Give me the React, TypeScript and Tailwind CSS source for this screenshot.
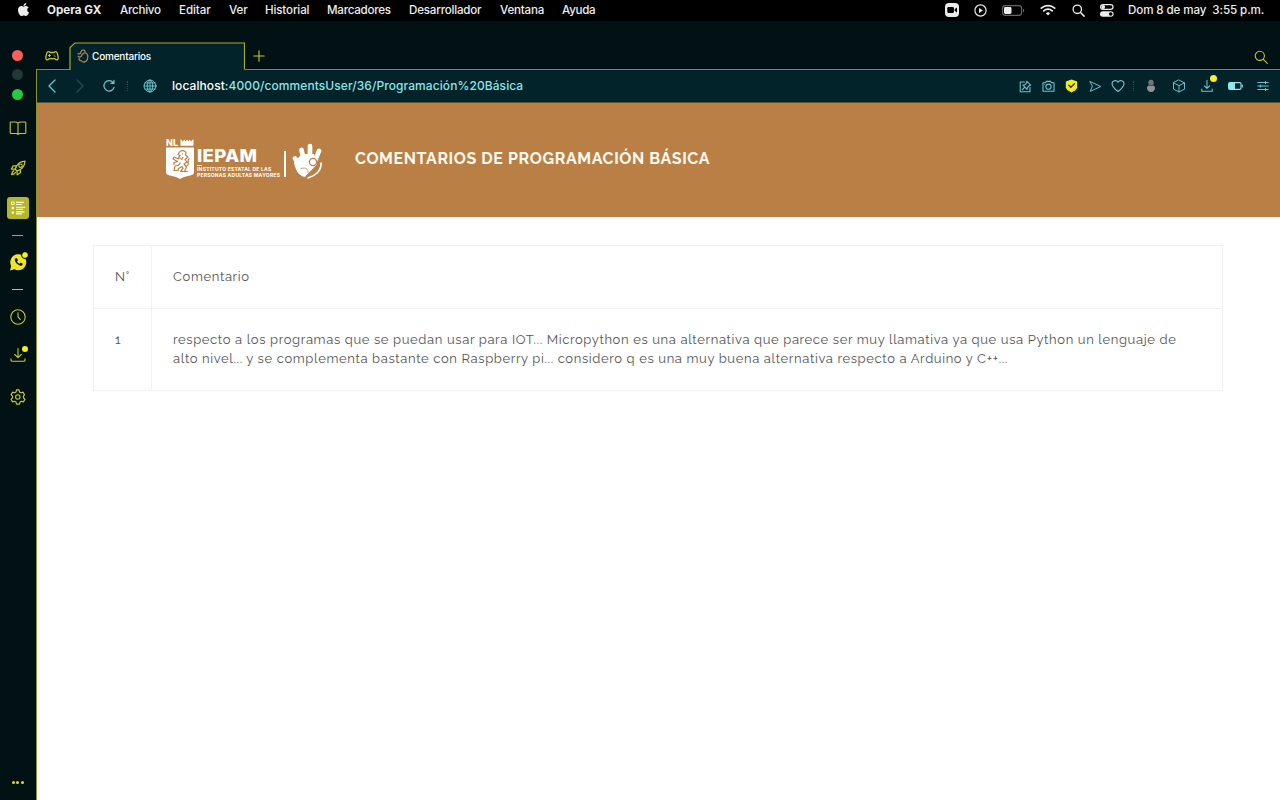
import type { ReactNode } from "react";
import { FaApple } from "react-icons/fa";

type IconProps = { className?: string; children: ReactNode; box?: string };

function Icon({ className = "", children, box = "0 0 16 16" }: IconProps) {
  return (
    <svg
      viewBox={box}
      className={`shrink-0 ${className}`}
      fill="none"
      stroke="currentColor"
      strokeWidth="1.1"
      strokeLinecap="round"
      strokeLinejoin="round"
    >
      {children}
    </svg>
  );
}

const menus = [
  { label: "Archivo", style: "ml-[18px] w-[41px] tracking-[-0.25px]" },
  { label: "Editar", style: "ml-[18px] w-[32px] tracking-[-0.1px]" },
  { label: "Ver", style: "ml-[18px] w-[18px] tracking-[-0.1px]" },
  { label: "Historial", style: "ml-[18px] w-[44px] tracking-[-0.15px]" },
  { label: "Marcadores", style: "ml-[18px] w-[64px] tracking-[-0.25px]" },
  { label: "Desarrollador", style: "ml-[18px] w-[73px] tracking-[-0.2px]" },
  { label: "Ventana", style: "ml-[18px] w-[44px] tracking-[-0.2px]" },
  { label: "Ayuda", style: "ml-[18px] w-[34px] tracking-[-0.3px]" },
];

function MenuBar() {
  return (
    <header className="flex h-[21px] shrink-0 items-center bg-black pr-4 text-[11.6px] font-medium text-[#ececec]">
      <FaApple className="ml-[17px] h-[15px] w-[13px] shrink-0 -translate-y-px" />
      <span className="ml-[17px] w-[55px] whitespace-nowrap font-bold">Opera GX</span>
      {menus.map((m) => (
        <span key={m.label} className={`whitespace-nowrap ${m.style}`}>
          {m.label}
        </span>
      ))}
      <div className="ml-auto flex items-center">
        <Icon className="h-[14px] w-[14px]" box="0 0 14 14">
          <rect width="14" height="14" rx="4" fill="currentColor" stroke="none" />
          <rect x="2.3" y="4" width="6.6" height="6" rx="1.2" fill="#000" stroke="none" />
          <path d="M9.6 6.2 12 4.5v5L9.6 7.8z" fill="#000" stroke="none" />
        </Icon>
        <Icon className="ml-[15px] h-[13px] w-[13px]" box="0 0 13 13">
          <circle cx="6.5" cy="6.5" r="5.6" strokeWidth="1.2" />
          <path d="M5 4.1v4.8l4-2.4z" fill="currentColor" stroke="none" />
        </Icon>
        <Icon className="ml-[15px] h-[11px] w-[23px]" box="0 0 23 11">
          <rect x="0.6" y="0.6" width="19" height="9.8" rx="2.8" stroke="#666" />
          <rect x="2" y="2" width="7.5" height="7" rx="1.4" fill="currentColor" stroke="none" />
          <path d="M21.5 4.5v2" stroke="#666" />
        </Icon>
        <Icon className="ml-[15px] h-[12px] w-[16px]" box="0 0 16 12">
          <path d="M1.300 4.200a9.800 9.800 0 0 1 13.400 0M3.800 6.800a6.200 6.200 0 0 1 8.400 0" strokeWidth="1.700" />
          <path d="M8 11.500 5.800 9.300a3.200 3.200 0 0 1 4.400 0z" fill="currentColor" stroke="none" />
        </Icon>
        <Icon className="ml-4 h-[13px] w-[13px]" box="0 0 13 13">
          <circle cx="5.300" cy="5.300" r="4.200" strokeWidth="1.300" />
          <path d="m8.500 8.500 3.600 3.600" strokeWidth="1.500" />
        </Icon>
        <Icon className="ml-[15px] h-[13px] w-[14px]" box="0 0 14 13">
          <rect x="0.600" y="0.600" width="12.400" height="4.800" rx="2.400" strokeWidth="1.200" />
          <circle cx="3.200" cy="3" r="1.900" fill="currentColor" stroke="none" />
          <rect y="7.200" width="13.600" height="5.600" rx="2.800" fill="currentColor" stroke="none" />
          <circle cx="10.700" cy="10" r="1.800" fill="#000" stroke="none" />
        </Icon>
        <span className="ml-[14px] w-[136px] whitespace-pre tracking-[-0.1px]">Dom 8 de may  3:55 p.m.</span>
      </div>
    </header>
  );
}

function Sidebar() {
  return (
    <nav className="flex w-9 shrink-0 flex-col items-center bg-[#011114] pr-px text-[#c6c92c]">
      <i className="mt-[29px] h-[11px] w-[11px] shrink-0 rounded-full bg-[#fb5f57]" />
      <i className="mt-[8px] h-[11px] w-[11px] shrink-0 rounded-full bg-[#23373a]" />
      <i className="mt-[9px] h-[11px] w-[11px] shrink-0 rounded-full bg-[#28c840]" />
      <Icon className="mt-[20px] h-[16px] w-[18px]" box="0 0 18 16">
        <path d="M9 3.200C8.400 2.300 7.500 2 6 2H2Q1.200 2 1.200 2.800V12.800Q1.200 13.500 2 13.500H6.800C8 13.500 8.500 13.700 9 14.300 9.500 13.700 10 13.500 11.200 13.500H16Q16.800 13.500 16.800 12.800V2.800Q16.800 2 16 2H12C10.500 2 9.600 2.300 9 3.200zV14" />
      </Icon>
      <Icon className="mt-6 h-4 w-4">
        <path d="M5.200 9.300C6.500 4.500 9.500 1.800 15 1.200 14.500 6.600 11.600 9.700 6.900 11zM6.100 5.800H3.200L1.400 9l3.700.200M10.400 9.900v2.900l-3.200 2-.300-3.700M3.800 10.700c-1.500.700-1.900 2-2.100 3.800 1.800-.200 3.100-.700 3.700-2.100" strokeWidth="1.300" />
        <circle cx="10.500" cy="5.700" r="1.700" />
      </Icon>
      <div className="mt-[21px] flex h-[22px] w-[22px] shrink-0 items-center justify-center rounded-[3px] bg-[#b5b629] text-[#fffce0]">
        <Icon className="h-4 w-4">
          <circle cx="2.800" cy="3.200" r="1.500" />
          <circle cx="2.800" cy="8" r="1.300" fill="currentColor" stroke="none" />
          <circle cx="2.800" cy="12.600" r="1.300" fill="currentColor" stroke="none" />
          <path d="M6.500 2.400h7M6.500 4.500h5M6.500 7.300h8.300M6.500 9.300h6M6.500 11.900h7.500M6.500 13.900h5" />
        </Icon>
      </div>
      <i className="mt-[16px] h-px w-[11px] shrink-0 bg-[#a8ad29]" />
      <div className="relative mt-[17px] h-[18px] w-[18px] shrink-0">
        <Icon className="h-[18px] w-[18px]" box="0 0 18 18">
          <path d="M1 17.500 2.200 13A8 8 0 1 1 5.500 16.300z" fill="#efe524" stroke="none" />
          <path d="M6.500 5.300 8 5.200l.900 2-.900 1.200c.600 1.100 1.400 1.800 2.500 2.300l1.100-1 2 .900-.100 1.400c-1.100 1.300-3.100.600-4.900-.700C6.400 9.600 4.800 7 6.500 5.300z" fill="#011114" stroke="none" />
        </Icon>
        <i className="absolute -top-px left-[13px] h-[6px] w-[6px] rounded-full bg-[#f7ec24] outline outline-1 outline-[#011114]" />
      </div>
      <i className="mt-[18px] h-px w-[11px] shrink-0 bg-[#c9ca2b]" />
      <Icon className="mt-[19px] h-4 w-4">
        <circle cx="8" cy="8" r="7.200" />
        <path d="M8 3.800V8l2.300 2.300" />
      </Icon>
      <div className="relative mt-[22px] h-4 w-4 shrink-0">
        <Icon className="h-4 w-4">
          <path d="M8 1.500v9M4.700 7.500 8 10.700l3.300-3.200M1 11.800v1.400q0 1 1 1h12q1 0 1-1v-1.400" />
        </Icon>
        <i className="absolute -top-px left-[12px] h-[6px] w-[6px] rounded-full bg-[#f7ee24]" />
      </div>
      <Icon className="mt-[26px] h-4 w-4">
        <path d="m6.500.900-.500 2-1.400.800-2-.600L1 5.700l1.500 1.500v1.600L1 10.300l1.600 2.600 2-.600 1.400.800.500 2h3l.500-2 1.400-.800 2 .600 1.600-2.600-1.500-1.500V7.200L14.500 5.700l-1.600-2.600-2 .600-1.400-.800-.500-2z" strokeWidth="1.200" />
        <circle cx="7.800" cy="8" r="2.200" />
      </Icon>
      <div className="mt-auto mb-[16px] flex gap-[1.500px]">
        <i className="h-[3px] w-[3px] rounded-full bg-[#d6df35]" />
        <i className="h-[3px] w-[3px] rounded-full bg-[#d6df35]" />
        <i className="h-[3px] w-[3px] rounded-full bg-[#d6df35]" />
      </div>
    </nav>
  );
}

function TabStrip() {
  return (
    <div className="flex h-[49px] shrink-0 items-end border-b border-[#7f8c24] bg-[#011114] text-[#c6c92c]">
      <Icon className="mb-[6px] ml-[9px] h-[14px] w-[14px]" box="0 0 14 14">
        <path d="M3.500 2.700C2 2.500 1.600 4 1 7.300c-.600 3.700 1 4.600 3.200 2.400h5.600c2.200 2.200 3.800 1.300 3.200-2.400-.600-3.300-1-4.800-2.500-4.600-1 .100-1.300.800-2 .800h-3c-.700 0-1-.700-2-.800z" strokeWidth="1.300" />
        <path d="M4.500 5.500v2M3.500 6.500h2M9 6h.100M10 7.200h.100" />
      </Icon>
      <div className="relative z-10 -mb-px ml-[10px] flex h-[28px] w-[176px] shrink-0 items-center text-white">
        <svg viewBox="0 0 176 28" className="absolute inset-0 h-full w-full" fill="none">
          <path d="M1 28V5.500L6 1H175.500V28z" fill="#022329" />
          <path d="M1 28V5.500L6 1H175.500V27.500" stroke="#a9ad27" strokeWidth="1.200" />
        </svg>
        <Icon className="relative ml-[8px] h-[14px] w-[12px] text-[#a9835a]" box="0 0 12 14">
          <path d="M4 2.800C5 .300 8.500.600 8 3.500 11 4.500 11.400 8 10.300 10.500 9 13.500 5.500 13.800 4 11.500M1 4.500c1.500 1 2.600 0 3-1.500M1.200 7.200C3 8.800 4.800 7.600 5 5.500M2.200 9.300c-.500 1.500.500 2.500 1.800 2.200M5 5.500 8 3.500" strokeWidth="1.300" />
        </Icon>
        <span className="relative ml-[3px] whitespace-nowrap text-[10px] font-medium tracking-[-0.200px]">Comentarios</span>
      </div>
      <Icon className="mb-[7px] ml-[8px] h-3 w-3" box="0 0 12 12">
        <path d="M6 .800v10.400M.800 6h10.400" />
      </Icon>
      <Icon className="mr-[12px] mb-[5px] ml-auto h-[14px] w-[14px]" box="0 0 14 14">
        <circle cx="5.800" cy="5.800" r="4.600" />
        <path d="m9.300 9.300 4 4" />
      </Icon>
    </div>
  );
}

function AddressBar() {
  return (
    <div className="flex h-[33px] shrink-0 items-center border-b border-[#5c512f] bg-[#022329] text-[#6cc4cd]">
      <Icon className="ml-[7px] h-4 w-4">
        <path d="M11 2 5 8l6 6" strokeWidth="1.300" />
      </Icon>
      <Icon className="ml-3 h-4 w-4 text-[#284b50]">
        <path d="m5 2 6 6-6 6" strokeWidth="1.200" />
      </Icon>
      <Icon className="ml-[13px] h-[14px] w-4">
        <path d="M12.600 4A5.900 5.900 0 1 0 13.800 9.500M13.700 1.500V5h-3.500" strokeWidth="1.400" />
      </Icon>
      <i className="ml-[10px] h-[10px] border-l border-dotted border-[#285057]" />
      <Icon className="ml-[15px] h-[14px] w-[14px]">
        <circle cx="8" cy="8" r="6.800" />
        <ellipse cx="8" cy="8" rx="3.200" ry="6.800" />
        <path d="M1.200 8h13.600M2.300 4.500h11.400M2.300 11.500h11.400M8 1.200v13.600" />
      </Icon>
      <span className="ml-[15px] whitespace-nowrap text-[12px] font-medium tracking-[0.075px] text-[#8be5ea]">
        <span className="text-white">localhost</span>:4000/commentsUser/36/Programación%20Básica
      </span>
      <Icon className="ml-auto h-[13px] w-[13px]">
        <path d="M7 2.500H1.500v12h12V9M9.500 1.500l5 5-1.800.300-2.500 2.500-.300 2.200L4.800 6.300l2.300-.200L9.400 3.500zM7.200 8.900 4 12" strokeWidth="1.300" />
      </Icon>
      <Icon className="ml-[10px] h-[13px] w-[13px]">
        <path d="M1.200 3.500h3L5.400 1.700h5.200l1.200 1.800h3v10.300H1.200z" strokeWidth="1.300" />
        <circle cx="8" cy="8.300" r="3.200" strokeWidth="1.300" />
        <path d="M3.200 5.700h.200" />
      </Icon>
      <Icon className="ml-[10px] h-[14px] w-[13px]" box="0 0 13 14">
        <path d="M6.500.500 12.200 2.500v6.200L10.500 11.200 6.500 13.500 2.500 11.200.800 8.700V2.500z" fill="#f3ea25" stroke="none" />
        <path d="m3.900 6.300 2 2 3.500-3.500" stroke="#26352a" strokeWidth="1.400" />
      </Icon>
      <Icon className="ml-[11px] h-[13px] w-[13px]">
        <path d="m1.500 2 13 6-13 6L4 8z" strokeWidth="1.200" />
      </Icon>
      <Icon className="ml-[9px] h-[14px] w-[14px]">
        <path d="M8 14.300C4.200 11.500 1.200 8.800 1.200 5.500c0-3.800 4.900-5 6.800-1.700 1.900-3.300 6.800-2.100 6.800 1.700 0 3.300-3 6-6.800 8.800z" strokeWidth="1.300" />
      </Icon>
      <i className="ml-[8px] h-[10px] border-l border-dotted border-[#285057]" />
      <Icon className="ml-[11px] h-[14px] w-[12px]" box="0 0 12 14">
        <ellipse cx="6" cy="3.800" rx="2.700" ry="3" fill="#747679" stroke="none" />
        <path d="M2 9c0-2 1.500-3 4-3s4 1 4 3-1.500 4-4 4-4-2-4-4z" fill="#8e9296" stroke="none" />
        <path d="M3.700 6.400h4.600" stroke="#3d494e" strokeWidth="1" />
      </Icon>
      <Icon className="ml-[15px] h-[14px] w-[14px]">
        <path d="m8 1.200 6.300 3.200v7.200L8 14.800l-6.300-3.200V4.400zM1.700 4.400 8 7.600l6.300-3.200M8 7.600v7.200" />
      </Icon>
      <div className="relative ml-[14px] h-[14px] w-[14px] shrink-0">
        <Icon className="h-[14px] w-[14px]">
          <path d="M8 1.500v9.200M5 8l3 2.800L11 8M2 11.500V14h12v-2.500" strokeWidth="1.200" />
        </Icon>
        <i className="absolute -top-[4px] left-[10px] h-[7px] w-[7px] rounded-full bg-[#fbf024]" />
      </div>
      <Icon className="ml-[14px] h-[8px] w-[15px] text-[#8eeaf0]" box="0 0 15 8">
        <rect x=".600" y=".600" width="12.400" height="6.800" rx="1.300" />
        <path d="M1 1h6v6H1z" fill="currentColor" stroke="none" />
        <path d="M14.300 3v2" />
      </Icon>
      <Icon className="mr-[11px] ml-[14px] h-3 w-3" box="0 0 12 12">
        <path d="M.800 2.500h10.400M.800 6h10.400M.800 9.500h10.400M8.500 1.500v2M3.500 5v2M8.500 8.500v2" />
      </Icon>
    </div>
  );
}

function Logo() {
  return (
    <div className="flex h-[42px] w-[157px] shrink-0 text-white">
      <div className="flex w-[29px] shrink-0 flex-col">
        <div className="flex h-[8px] shrink-0 items-start">
          <span className="w-[14px] font-['Inter'] text-[9px] leading-[8px] font-extrabold">NL</span>
          <svg viewBox="0 0 14 8" className="h-2 w-[14px]" fill="currentColor">
            <path d="M.500 0 3 2.500 4.300.500 5.700 2.500 7 .500 8.300 2.500 9.700.500 11 2.500 13.500 0V6.800H.500z" />
          </svg>
        </div>
        <svg viewBox="0 0 29 33" className="h-[33px] w-[29px] shrink-0">
          <path d="M0 .500H28V25Q28 28 24 28.500L18 30 14 32 10 30 4 28.500Q0 28 0 25z" fill="currentColor" />
          <path
            d="M13.500 5C15 3 19 3 20 5.500L19.500 8 22 10 19 12.500 21 15 18 17 20.500 20 18.500 24.500H22M13.500 5 12 7.500 14 8.500 12.500 10.500 15 11.500M13 12 8 10 7 12 11.500 14.500 8 15.500V18M14 15.500C14.500 18 12 18.500 9 19L8 23.500H12L12.500 21.500 16 19.500 17 21.500 14.500 24.500H18M20.500 19C24.500 18 20 13 23.500 11.500M16 7H17M17 10 15.500 13"
            fill="none"
            stroke="#ba7f45"
            strokeWidth="1.200"
            strokeLinejoin="round"
          />
        </svg>
      </div>
      <div className="ml-[2px] w-[84px] shrink-0 pt-[10px] whitespace-nowrap">
        <div className="origin-left scale-x-[1.09] font-['Inter'] text-[17px] leading-[15px] font-extrabold tracking-[0.250px]">
          IEPAM
        </div>
        <i className="mt-[1px] block h-px w-[5px] bg-white" />
        <div className="mt-[1px] font-['Inter'] text-[5px] leading-[5.500px] font-bold">
          <div className="tracking-[0.220px]">INSTITUTO ESTATAL DE LAS</div>
          <div className="tracking-[0.220px]">PERSONAS ADULTAS MAYORES</div>
        </div>
      </div>
      <i className="mt-[12px] ml-[3px] h-[26px] w-[1.500px] shrink-0 bg-white" />
      <svg viewBox="0 0 32 42" className="ml-[6px] h-[42px] w-[32px] shrink-0" fill="none" stroke="currentColor" strokeLinecap="round">
        <path d="M8 27 3 19.500M12 22 9.500 11M18 20V7M23 22 27 12" strokeWidth="4.700" />
        <path d="M2 23C3 31 7 37 13 38 15 35 20 31 25 25L22 15H10z" fill="currentColor" stroke="none" />
        <path d="M9 29.500C14 28 16.500 30 16 33.500" strokeWidth="0.800" stroke="#ba7f45" />
        <circle cx="21" cy="23" r="3.600" fill="#fff" stroke="#ba7f45" strokeWidth="1.200" />
        <path d="M29 24C29.500 32 23 37 16 39" strokeWidth="1.700" />
      </svg>
    </div>
  );
}

function CommentsPage() {
  return (
    <main className="flex-1 bg-white font-['Raleway','Lato',sans-serif]">
      <div className="flex h-[114px] bg-[#ba7f45]">
        <div className="flex pt-[36px] pl-[129px]">
          <Logo />
          <h1 className="ml-[32px] pt-[8px] text-[16px] leading-6 font-bold tracking-[0.600px] whitespace-nowrap text-[#fffaf0]">
            COMENTARIOS DE PROGRAMACIÓN BÁSICA
          </h1>
        </div>
      </div>
      <table className="mt-[28px] ml-[56px] w-[1130px] table-fixed border-collapse text-left text-[13px] leading-[19px] tracking-[0.630px] text-[#555555]">
        <colgroup>
          <col className="w-[58px]" />
          <col />
        </colgroup>
        <thead>
          <tr className="h-[63px]">
            <th className="border border-[#f1f1f1] pb-px pl-[21px] font-normal">N°</th>
            <th className="border border-[#f1f1f1] pb-px pl-[21px] font-normal">Comentario</th>
          </tr>
        </thead>
        <tbody>
          <tr className="h-[82px]">
            <td className="border border-[#f1f1f1] pt-[21px] pl-[21px] align-top">1</td>
            <td className="border border-[#f1f1f1] pt-[21px] pl-[21px] align-top whitespace-nowrap">
              respecto a los programas que se puedan usar para IOT... Micropython es una alternativa que parece ser muy llamativa ya que usa Python un lenguaje de
              <br />
              alto nivel... y se complementa bastante con Raspberry pi... considero q es una muy buena alternativa respecto a Arduino y C++...
            </td>
          </tr>
        </tbody>
      </table>
    </main>
  );
}

export default function App() {
  return (
    <div className="flex h-[800px] w-[1280px] flex-col overflow-hidden bg-[#011114] font-['Inter',sans-serif]">
      <MenuBar />
      <div className="flex min-h-0 flex-1">
        <Sidebar />
        <div className="flex min-w-0 flex-1 flex-col">
          <TabStrip />
          <div className="flex min-h-0 flex-1 flex-col border-l border-[#89922c]">
            <AddressBar />
            <CommentsPage />
          </div>
        </div>
      </div>
    </div>
  );
}
